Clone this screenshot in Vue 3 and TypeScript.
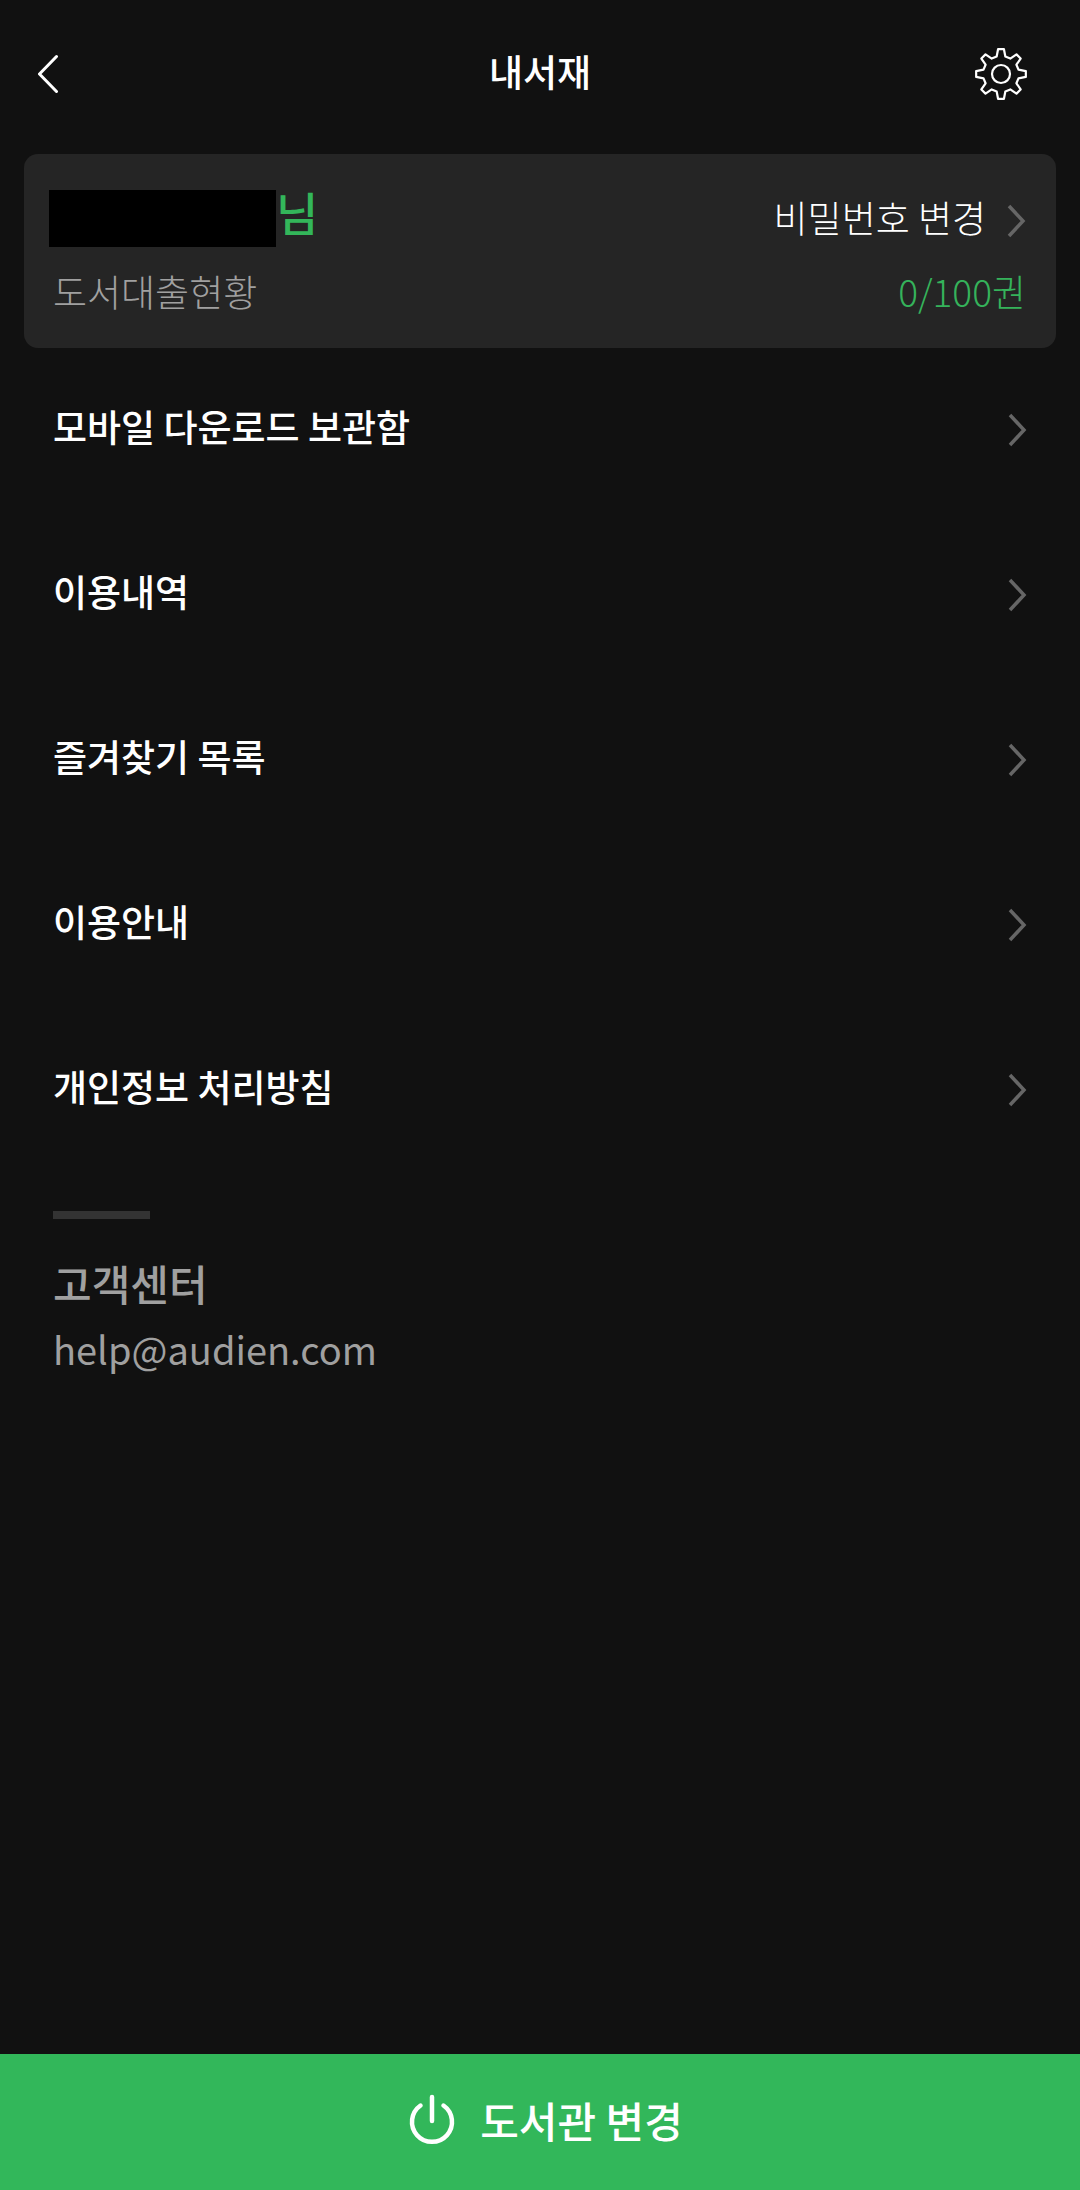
<template>
  <div class="page">
    <header class="topbar">
      <svg class="back" width="22" height="40" viewBox="0 0 22 40">
        <path d="M18.5 2.5 L1.5 20 L18.5 37.5" />
      </svg>
      <h1 class="title">내서재</h1>
      <svg class="gear" width="56" height="56" viewBox="0 0 56 56">
        <path :d="gearPath" />
        <circle cx="28" cy="28" r="9" />
      </svg>
    </header>

    <section class="card">
      <div class="card-row">
        <div class="user">
          <span class="redacted"></span>
          <span class="honorific">님</span>
        </div>
        <div class="password">
          <span class="password-label">비밀번호 변경</span>
          <svg class="chevron" width="20" height="36" viewBox="0 0 20 36">
            <path d="M3 3 L17 18 L3 33" />
          </svg>
        </div>
      </div>
      <div class="card-row loan">
        <span class="loan-label">도서대출현황</span>
        <span class="loan-count">0/100권</span>
      </div>
    </section>

    <ul class="menu">
      <li v-for="item in menuItems" :key="item" class="menu-item">
        <span class="menu-label">{{ item }}</span>
        <svg class="chevron" width="20" height="36" viewBox="0 0 20 36">
          <path d="M3 3 L17 18 L3 33" />
        </svg>
      </li>
    </ul>

    <section class="support">
      <div class="divider"></div>
      <div class="support-title">고객센터</div>
      <div class="support-mail">help@audien.com</div>
    </section>

    <footer class="footer">
      <svg class="power" width="50" height="54" viewBox="0 0 50 54">
        <path d="M12.5 13.5 A20 20 0 1 0 35.5 13.5" />
        <path d="M24 5 L24 29" />
      </svg>
      <span>도서관 변경</span>
    </footer>
  </div>
</template>

<script setup lang="ts">
const menuItems: string[] = [
  "모바일 다운로드 보관함",
  "이용내역",
  "즐겨찾기 목록",
  "이용안내",
  "개인정보 처리방침",
];

// 8 teeth gear outline, around the centre of a 56 box
function buildGear(): string {
  const points: string[] = [];
  const teeth = 8;
  for (let i = 0; i < teeth; i++) {
    const a = (i * Math.PI * 2) / teeth - Math.PI / 2;
    const step = Math.PI / teeth;
    const corners: [number, number][] = [
      [18, a - step * 0.62],
      [25, a - step * 0.3],
      [25, a + step * 0.3],
      [18, a + step * 0.62],
    ];
    for (const [r, t] of corners) {
      const x = 28 + r * Math.cos(t);
      const y = 28 + r * Math.sin(t);
      points.push(`${x.toFixed(2)} ${y.toFixed(2)}`);
    }
  }
  return `M${points.join(" L")} Z`;
}

const gearPath = buildGear();
</script>

<style>
html,
body {
  margin: 0;
  background: #111111;
}
</style>

<style scoped>
.page {
  display: flex;
  flex-direction: column;
  width: 1080px;
  height: 2190px;
  background: #111111;
  color: #ffffff;
  font-family: "Noto Sans CJK KR", "Noto Sans", sans-serif;
}

.topbar {
  display: grid;
  grid-template-columns: 1fr auto 1fr;
  align-items: center;
  height: 154px;
  padding: 0 51px 6px;
  box-sizing: border-box;
}

.back {
  justify-self: start;
  margin-left: -13px;
}

.gear {
  justify-self: end;
}

.back path {
  fill: none;
  stroke: #ffffff;
  stroke-width: 3;
  stroke-linecap: round;
  stroke-linejoin: round;
}

.title {
  margin: 0 0 6px;
  font-size: 37px;
  font-weight: 500;
  line-height: 1;
}

.gear path,
.gear circle {
  fill: none;
  stroke: #ffffff;
  stroke-width: 2.2;
  stroke-linejoin: round;
}

.card {
  display: flex;
  flex-direction: column;
  height: 194px;
  margin: 0 24px;
  padding: 36px 30px 0 25px;
  box-sizing: border-box;
  background: #252525;
  border-radius: 14px;
}

.card-row {
  display: flex;
  align-items: center;
  justify-content: space-between;
}

.user {
  display: flex;
  align-items: flex-start;
}

.redacted {
  width: 227px;
  height: 57px;
  background: #000000;
}

.honorific {
  margin-top: -7px;
  color: #33b65a;
  font-size: 46px;
  font-weight: 500;
  line-height: 57px;
}

.password {
  display: flex;
  align-items: center;
  gap: 20px;
  font-size: 37px;
  font-weight: 300;
  line-height: 54px;
}

.password-label {
  padding-bottom: 3px;
}

.password .chevron {
  margin-top: 5px;
}

.chevron path {
  fill: none;
  stroke: #666666;
  stroke-width: 3.5;
}

.loan {
  margin-top: 19px;
  padding-left: 4px;
  font-size: 37px;
  font-weight: 300;
  line-height: 50px;
}

.loan-label {
  color: #a0a0a0;
}

.loan-count {
  color: #35b35b;
}

.menu {
  margin: -1px 0 0;
  padding: 0 53px;
  list-style: none;
}

.menu-item {
  display: flex;
  align-items: center;
  justify-content: space-between;
  height: 165px;
  font-size: 37px;
  font-weight: 500;
}

.menu-label {
  padding-bottom: 8px;
}

.support {
  margin-top: 39px;
  padding-left: 53px;
}

.divider {
  width: 97px;
  height: 8px;
  background: #333333;
}

.support-title {
  margin-top: 34px;
  color: #a0a0a0;
  font-size: 42px;
  font-weight: 500;
  line-height: 60px;
}

.support-mail {
  margin-top: 7px;
  color: #a0a0a0;
  font-size: 38px;
  line-height: 58px;
}

.footer {
  display: flex;
  align-items: center;
  justify-content: center;
  gap: 22px;
  height: 136px;
  margin-top: auto;
  padding: 0 0 6px 11px;
  box-sizing: border-box;
  background: #32b75a;
  font-size: 42px;
  font-weight: 500;
}

.power path {
  fill: none;
  stroke: #ffffff;
  stroke-width: 4.5;
  stroke-linecap: round;
}
</style>
